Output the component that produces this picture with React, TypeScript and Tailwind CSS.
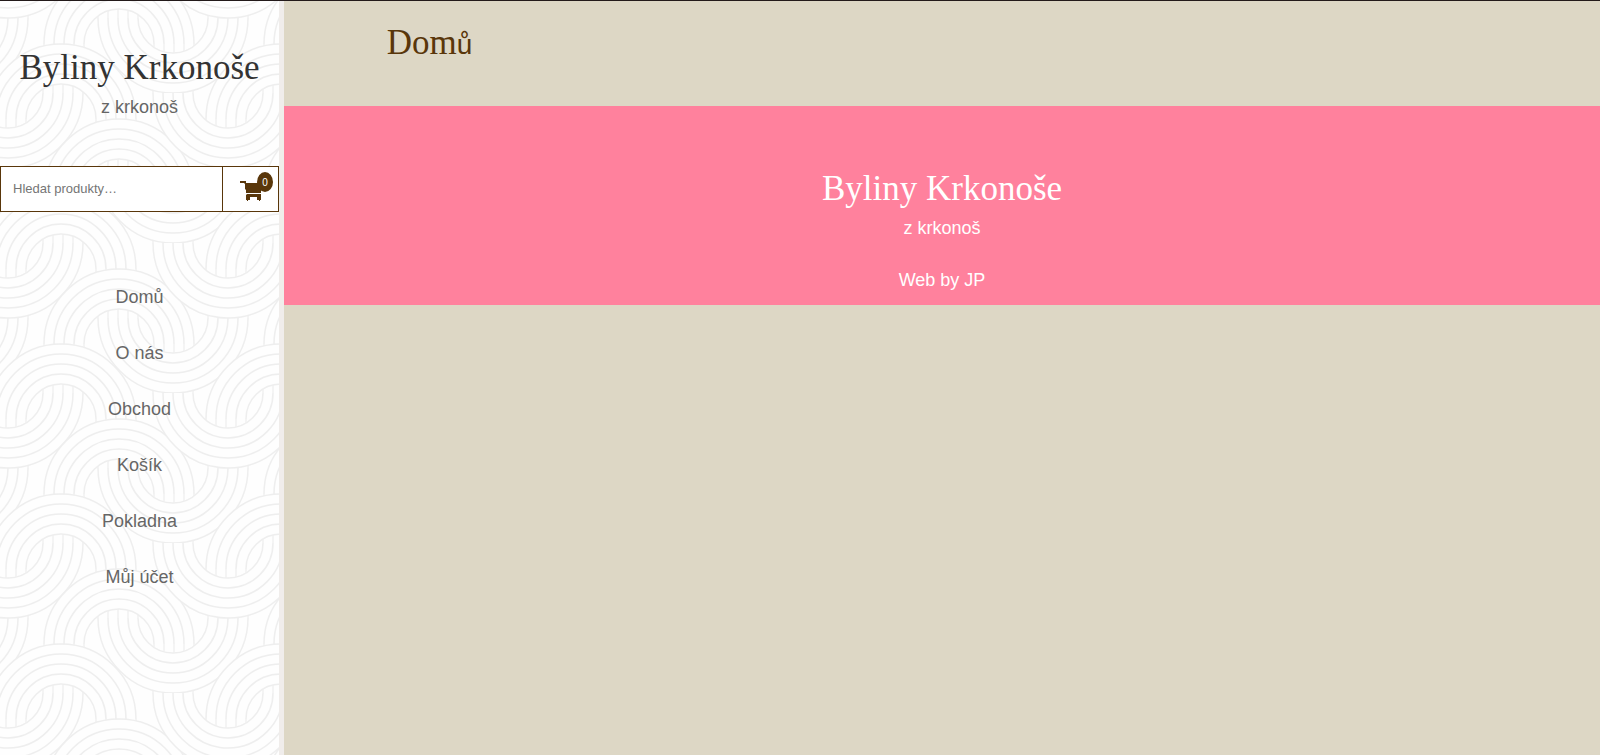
const navItems = ['Domů', 'O nás', 'Obchod', 'Košík', 'Pokladna', 'Můj účet'];

interface Arch {
  cx: number;
  cy: number;
  up: boolean;
}

const TILE_WIDTH = 220;
const TILE_HEIGHT = 150;
const RADII = [35, 45, 55, 65, 75];

const baseArches: Arch[] = [
  { cx: 119, cy: 43, up: true },
  { cx: 173, cy: 17, up: false },
  { cx: 61, cy: 118, up: true },
  { cx: 8, cy: 92, up: false },
];

// repeat every arch around the tile so the pattern joins at its edges
const arches = [-1, 0, 1].flatMap((col) => [-1, 0, 1].flatMap((row) => baseArches.map((arch) => ({ ...arch, cx: arch.cx + col * TILE_WIDTH, cy: arch.cy + row * TILE_HEIGHT }))));

const legPath = ({ cx, cy, up }: Arch) => RADII.map((r) => `M${cx - r} ${cy}v${up ? 12 : -12}M${cx + r} ${cy}v${up ? 12 : -12}`).join('');

const arcPath = ({ cx, cy, up }: Arch) => RADII.map((r) => `M${cx - r} ${cy}a${r} ${r} 0 0 ${up ? 1 : 0} ${2 * r} 0`).join('');

const bandPath = ({ cx, cy, up }: Arch) => `M${cx - 75} ${cy}a75 75 0 0 ${up ? 1 : 0} 150 0h-40a35 35 0 0 ${up ? 0 : 1} -70 0z`;

const ArchPattern = () => (
  <svg className="absolute inset-0 h-full w-full" aria-hidden="true">
    <defs>
      <pattern id="arches" width={TILE_WIDTH} height={TILE_HEIGHT} patternUnits="userSpaceOnUse">
        <g fill="none" stroke="#f1f1f1" strokeWidth="1.5">
          {arches.map((arch, i) => (
            <path key={i} d={legPath(arch)} />
          ))}
        </g>
        {arches.map((arch, i) => (
          <g key={i}>
            <path d={bandPath(arch)} fill="#fefefe" />
            <path d={arcPath(arch)} fill="none" stroke="#eeeeee" strokeWidth="1.5" />
          </g>
        ))}
      </pattern>
    </defs>
    <rect width="100%" height="100%" fill="url(#arches)" />
  </svg>
);

const CartIcon = () => (
  <svg width="22" height="20" viewBox="0 0 22 20" fill="#59360a" aria-hidden="true">
    <path d="M0 0h6v2h15v10H6V9L5 8V3L4 2H0z" />
    <path d="M7 13h14v3H6v-2z" />
    <path d="M6 15h4v4H8v1H7v-1H6zM17 15h4v4h-1v1h-1v-1h-2z" />
  </svg>
);

interface BrandProps {
  nameClass: string;
  taglineClass: string;
}

const Brand = ({ nameClass, taglineClass }: BrandProps) => (
  <div className="text-center">
    <a href="#" className={`block font-['Liberation_Serif',serif] text-[35px] leading-[50px] ${nameClass}`}>
      Byliny Krkonoše
    </a>
    <p className={`leading-7 ${taglineClass}`}>z krkonoš</p>
  </div>
);

const SearchBar = () => (
  <div className="mt-[45px] flex h-[46px] border border-[#59360a] bg-white">
    <form className="flex min-w-0 flex-1" role="search">
      <input type="search" aria-label="Hledat produkty" placeholder="Hledat produkty…" className="w-full min-w-0 px-3 text-[13px] text-[#59360a] outline-none placeholder:text-[#757575]" />
    </form>
    <a href="#" aria-label="Košík" className="relative flex w-14 shrink-0 items-center justify-center border-l border-[#59360a] pt-1">
      <CartIcon />
      <span className="absolute top-[5px] right-[5px] flex h-5 w-4 items-center justify-center rounded-[50%] bg-[#59360a] text-[10px] text-white">0</span>
    </a>
  </div>
);

const Sidebar = () => (
  <aside className="relative w-71 shrink-0 border-r-5 border-[#f0edeb] bg-[#fefefe]">
    <ArchPattern />
    <div className="relative pt-[42px]">
      <Brand nameClass="text-[#333333]" taglineClass="text-[#666666]" />
      <SearchBar />
      <nav className="mt-[57px]">
        <ul className="text-center text-[#666666]">
          {navItems.map((item) => (
            <li key={item}>
              <a href="#" className="block leading-14">
                {item}
              </a>
            </li>
          ))}
        </ul>
      </nav>
    </div>
  </aside>
);

export default function App() {
  return (
    <div className="flex min-h-screen border-t border-[#231a1a] bg-[#ddd7c5] font-['Liberation_Sans',Arial,sans-serif] text-[18px]">
      <Sidebar />
      <div className="min-w-0 flex-1">
        <header className="px-[7.8%] pt-[18px] pb-[39px]">
          <h1 className="font-['Liberation_Serif',serif] text-[35px] leading-12 text-[#59360a]">
            Dom<span className="font-['Liberation_Sans',sans-serif] text-[28px] leading-none">ů</span>
          </h1>
        </header>
        <footer className="bg-[#ff819d] pt-[58px] pb-[11px] text-center text-white">
          <Brand nameClass="text-white" taglineClass="text-white" />
          <p className="mt-6 leading-7">Web by JP</p>
        </footer>
      </div>
    </div>
  );
}
